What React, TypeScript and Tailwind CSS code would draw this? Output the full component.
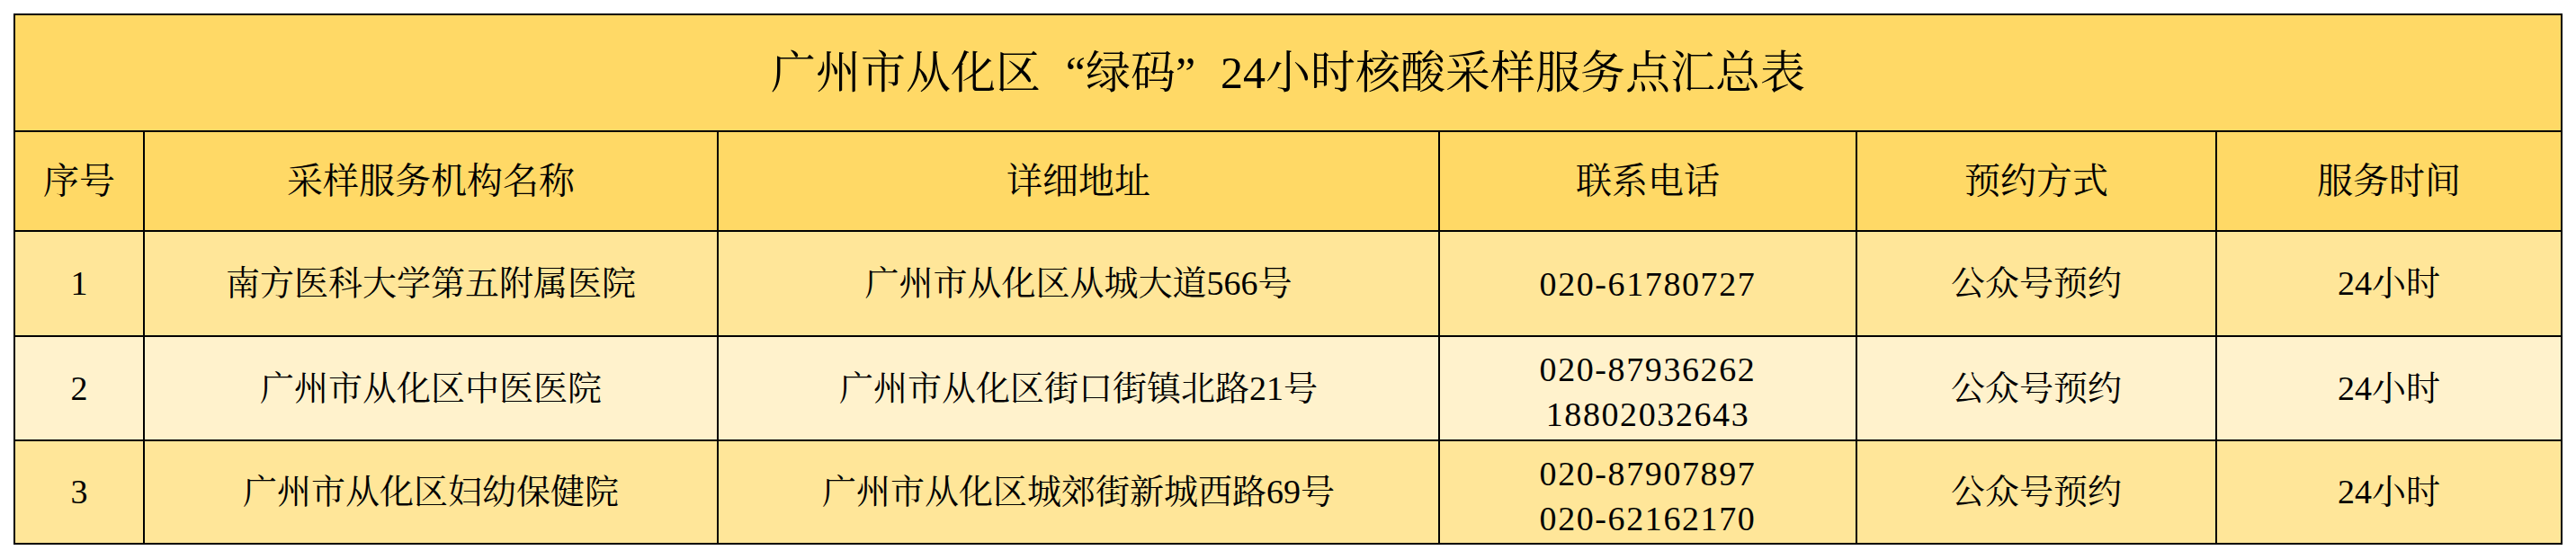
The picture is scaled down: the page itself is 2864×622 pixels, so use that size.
const rows = [
  {
    no: "1",
    name: "南方医科大学第五附属医院",
    addr: "广州市从化区从城大道566号",
    phones: ["020-61780727"],
    bg: "bg-[#ffe699]",
  },
  {
    no: "2",
    name: "广州市从化区中医医院",
    addr: "广州市从化区街口街镇北路21号",
    phones: ["020-87936262", "18802032643"],
    bg: "bg-[#fff2cc]",
  },
  {
    no: "3",
    name: "广州市从化区妇幼保健院",
    addr: "广州市从化区城郊街新城西路69号",
    phones: ["020-87907897", "020-62162170"],
    bg: "bg-[#ffe699]",
  },
];

const headers = ["序号", "采样服务机构名称", "详细地址", "联系电话", "预约方式", "服务时间"];

function Cell({ bg, className = "", children }: { bg: string; className?: string; children: React.ReactNode }) {
  return (
    <div className={`flex flex-col items-center justify-center text-center ${bg} ${className}`}>{children}</div>
  );
}

export default function App() {
  return (
    <div className="min-h-screen bg-white pl-[15px] pt-[15px] font-['Liberation_Serif','Noto_Serif_CJK_SC','Noto_Sans_CJK_SC',serif] text-black">
      <div className="grid w-[2834px] grid-cols-[142px_636px_800px_462px_398px_382px] grid-rows-[128px_109px_115px_114px_113px] gap-[2px] border-2 border-black bg-black">
        {/* Title, quotes take a full em like the Song font */}
        <div className="col-span-6 flex items-center justify-center bg-[#ffd966] text-[50px]">
          <span>
            广州市从化区<span className="inline-block w-[50px] text-right">“</span>绿码
            <span className="inline-block w-[50px] text-left">”</span>24小时核酸采样服务点汇总表
          </span>
        </div>

        {/* Header row */}
        {headers.map((h) => (
          <Cell key={h} bg="bg-[#ffd966]">
            <span className="text-[40px]">{h}</span>
          </Cell>
        ))}

        {/* Data rows */}
        {rows.map((r) => (
          <div key={r.no} className="contents text-[38px]">
            <Cell bg={r.bg}>{r.no}</Cell>
            <Cell bg={r.bg}>{r.name}</Cell>
            <Cell bg={r.bg}>{r.addr}</Cell>
            <Cell bg={r.bg} className={r.phones.length > 1 ? "pt-[8px]" : ""}>
              {r.phones.map((p) => (
                <span key={p} className="leading-[50px] tracking-[1.6px]">
                  {p}
                </span>
              ))}
            </Cell>
            <Cell bg={r.bg}>公众号预约</Cell>
            <Cell bg={r.bg}>24小时</Cell>
          </div>
        ))}
      </div>
    </div>
  );
}
